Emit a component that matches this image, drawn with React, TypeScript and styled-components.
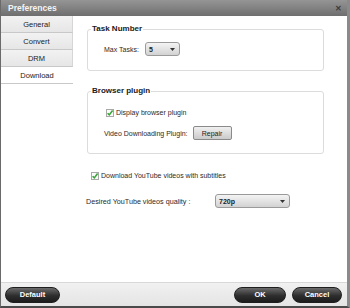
import styled, { createGlobalStyle } from 'styled-components'

const GlobalStyle = createGlobalStyle`
  html, body {
    margin: 0;
    padding: 0;
    background: #ffffff;
  }
  body {
    font-family: 'Liberation Sans', Arial, sans-serif;
  }
`

const Tabs = ['General', 'Convert', 'DRM', 'Download']

const CheckMark = () => (
  <svg width="8" height="8" viewBox="0 0 8 8">
    <rect x="0.5" y="0.5" width="7" height="7" fill="#fbfbfb" stroke="#a8a8a8" />
    <path d="M1.6 4.2 L3.3 5.9 L6.6 1.6" fill="none" stroke="#3aa53a" strokeWidth="1.6" />
  </svg>
)

const Arrow = () => (
  <svg width="5" height="3" viewBox="0 0 5 3">
    <path d="M0 0 H5 L2.5 3 Z" fill="#333" />
  </svg>
)

const App = () => {
  return (
    <>
      <GlobalStyle />
      <StyledWindow>
        <StyledTitleBar>
          <StyledTitle>Preferences</StyledTitle>
          <StyledClose>✕</StyledClose>
        </StyledTitleBar>
        <StyledBody>
          <StyledSidebar>
            {Tabs.map((tab) => (
              <StyledTab key={tab} active={tab === 'Download'}>
                {tab}
              </StyledTab>
            ))}
          </StyledSidebar>
          <StyledContent>
            <StyledGroup height={42}>
              <StyledGroupTitle>Task Number</StyledGroupTitle>
              <StyledRow top={8} gap={6}>
                <StyledLabel>Max Tasks:</StyledLabel>
                <StyledSelect width={35}>
                  <span>5</span>
                  <Arrow />
                </StyledSelect>
              </StyledRow>
            </StyledGroup>
            <StyledGroup height={63} top={20}>
              <StyledGroupTitle>Browser plugin</StyledGroupTitle>
              <StyledCheckRow top={12} left={2}>
                <CheckMark />
                <StyledLabel>Display browser plugin</StyledLabel>
              </StyledCheckRow>
              <StyledRow top={9} gap={5}>
                <StyledLabel>Video Downloading Plugin:</StyledLabel>
                <StyledRepair>Repair</StyledRepair>
              </StyledRow>
            </StyledGroup>
            <StyledCheckRow top={17} left={4}>
              <CheckMark />
              <StyledLabel>Download YouTube videos with subtitles</StyledLabel>
            </StyledCheckRow>
            <StyledQualityRow>
              <StyledQualityLabel>Desired YouTube videos quality :</StyledQualityLabel>
              <StyledSelect width={75}>
                <span>720p</span>
                <Arrow />
              </StyledSelect>
            </StyledQualityRow>
          </StyledContent>
        </StyledBody>
        <StyledFooter>
          <StyledDarkButton width={55}>Default</StyledDarkButton>
          <StyledFooterRight>
            <StyledDarkButton width={52}>OK</StyledDarkButton>
            <StyledDarkButton width={50}>Cancel</StyledDarkButton>
          </StyledFooterRight>
        </StyledFooter>
      </StyledWindow>
    </>
  )
}

export default App

const StyledWindow = styled.div`
  width: 350px;
  height: 308px;
  box-sizing: border-box;
  display: flex;
  flex-direction: column;
  background: #ffffff;
  border-left: 1px solid #6a6a6a;
  border-right: 3px solid #8a8a8a;
  border-bottom: 2px solid #4a4a4a;
  overflow: hidden;
`
const StyledTitleBar = styled.div`
  height: 16px;
  flex: none;
  display: flex;
  align-items: center;
  justify-content: space-between;
  padding: 0 5px 0 7px;
  background: linear-gradient(#959595, #6e6e6e);
`
const StyledTitle = styled.span`
  color: #f4f4f4;
  font-size: 8.5px;
  font-weight: bold;
`
const StyledClose = styled.span`
  color: #3c3c3c;
  font-size: 8px;
  font-weight: bold;
`
const StyledBody = styled.div`
  flex: 1;
  display: flex;
  min-height: 0;
`
const StyledSidebar = styled.div`
  width: 72px;
  flex: none;
  display: flex;
  flex-direction: column;
`
const StyledTab = styled.div<{ active?: boolean }>`
  height: 16px;
  display: flex;
  align-items: center;
  justify-content: center;
  font-size: 7.5px;
  color: #222;
  background: ${(p) => (p.active ? '#ffffff' : 'linear-gradient(#f2f2f2, #e6e6e6)')};
  border-bottom: 1px solid #c8c8c8;
  border-right: ${(p) => (p.active ? 'none' : '1px solid #d6d6d6')};
`
const StyledContent = styled.div`
  flex: 1;
  display: flex;
  flex-direction: column;
  align-items: flex-start;
  padding: 13px 0 0 14px;
`
const StyledGroup = styled.div<{ height: number; top?: number }>`
  width: 237px;
  height: ${(p) => p.height}px;
  box-sizing: border-box;
  margin-top: ${(p) => p.top ?? 0}px;
  padding: 0 0 0 16px;
  border: 1px solid #dcdcdc;
  border-radius: 3px;
  display: flex;
  flex-direction: column;
  align-items: flex-start;
`
const StyledGroupTitle = styled.span`
  margin: -6px 0 0 -13px;
  padding: 0 1px;
  line-height: 10px;
  background: #ffffff;
  font-size: 8px;
  font-weight: bold;
  color: #1a1a1a;
`
const StyledRow = styled.div<{ top: number; gap: number }>`
  display: flex;
  align-items: center;
  gap: ${(p) => p.gap}px;
  margin-top: ${(p) => p.top}px;
`
const StyledCheckRow = styled.div<{ top: number; left: number }>`
  display: flex;
  align-items: center;
  gap: 2px;
  height: 9px;
  margin: ${(p) => p.top}px 0 0 ${(p) => p.left}px;
`
const StyledLabel = styled.span`
  font-size: 7px;
  color: #2a2a2a;
  white-space: nowrap;
`
const StyledQualityLabel = styled(StyledLabel)`
  width: 124px;
  font-size: 7.2px;
`
const StyledSelect = styled.div<{ width: number }>`
  width: ${(p) => p.width}px;
  height: 14px;
  box-sizing: border-box;
  display: flex;
  align-items: center;
  justify-content: space-between;
  padding: 0 4px 0 3px;
  border: 1px solid #9a9a9a;
  border-radius: 3px;
  background: linear-gradient(#f4f4f4, #d2d2d2);
  font-size: 7px;
  font-weight: bold;
  color: #222;
`
const StyledRepair = styled.div`
  width: 39px;
  height: 14px;
  box-sizing: border-box;
  display: flex;
  align-items: center;
  justify-content: center;
  border: 1px solid #8a8a8a;
  border-radius: 2px;
  background: linear-gradient(#f0f0f0, #cacaca);
  font-size: 7px;
  color: #222;
`
const StyledQualityRow = styled.div`
  display: flex;
  align-items: center;
  gap: 5px;
  margin: 14px 0 0 -1px;
`
const StyledFooter = styled.div`
  height: 23px;
  flex: none;
  display: flex;
  align-items: center;
  justify-content: space-between;
  padding: 0 5px 0 4px;
  border-top: 1px solid #d8d8d8;
  background: linear-gradient(#f1f1f1, #e4e4e4);
`
const StyledFooterRight = styled.div`
  display: flex;
  gap: 6px;
`
const StyledDarkButton = styled.div<{ width: number }>`
  width: ${(p) => p.width}px;
  height: 16px;
  box-sizing: border-box;
  display: flex;
  align-items: center;
  justify-content: center;
  border: 1px solid #1e1e1e;
  border-radius: 8px;
  background: linear-gradient(#6a6a6a, #2e2e2e 55%, #1c1c1c);
  color: #ffffff;
  font-size: 7.5px;
  font-weight: bold;
`
